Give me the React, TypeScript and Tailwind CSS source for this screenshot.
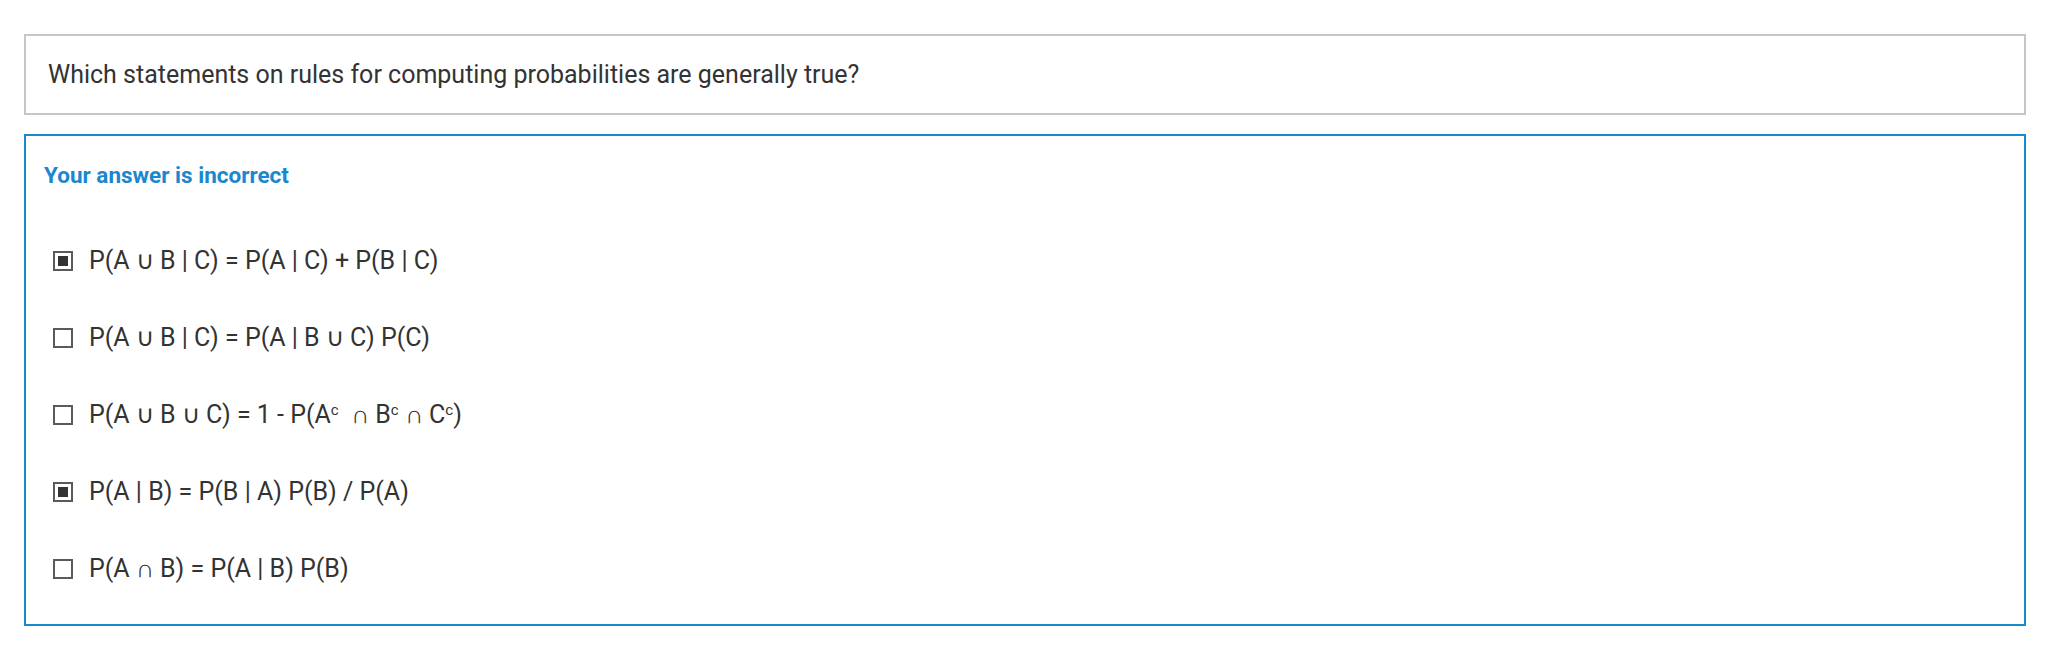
import React from "react";

type Option = {
  checked: boolean;
  label: React.ReactNode;
};

const options: Option[] = [
  { checked: true, label: "P(A ∪ B | C) = P(A | C) + P(B | C)" },
  { checked: false, label: "P(A ∪ B | C) = P(A | B ∪ C) P(C)" },
  {
    checked: false,
    label: (
      <>
        P(A ∪ B ∪ C) = 1 - P(A<sup className="text-[15px] -top-[0.55em]">c</sup>&nbsp; ∩ B
        <sup className="text-[15px] -top-[0.55em]">c</sup> ∩ C<sup className="text-[15px] -top-[0.55em]">c</sup>)
      </>
    ),
  },
  { checked: true, label: "P(A | B) = P(B | A) P(B) / P(A)" },
  { checked: false, label: "P(A ∩ B) = P(A | B) P(B)" },
];

// Read-only checkbox like the ones in the result view
function Box({ checked }: { checked: boolean }) {
  return (
    <span className="flex h-[20px] w-[20px] shrink-0 items-center justify-center border-2 border-[#5a5a5a] bg-white">
      {checked && <span className="h-[10px] w-[10px] bg-[#333333]" />}
    </span>
  );
}

export default function App() {
  return (
    <div className="min-h-screen bg-white px-[24px] pt-[34px] font-['Roboto','Liberation_Sans',sans-serif] text-[#333333]">
      <div className="flex h-[81px] items-center border-2 border-[#c9c6c1] px-[22px] text-[25px]">
        Which statements on rules for computing probabilities are generally true?
      </div>

      <div className="mt-[19px] border-2 border-[#1a87cf] pb-[35px] pl-[18px] pt-[24px]">
        <h3 className="text-[22.5px] font-bold leading-[30px] text-[#1a87cf]">
          Your answer is incorrect
        </h3>
        <ul className="mt-[51px] flex flex-col gap-[37px] pl-[9px]">
          {options.map((opt, i) => (
            <li key={i} className="flex h-[40px] items-center gap-[16px] text-[25px]">
              <Box checked={opt.checked} />
              <span>{opt.label}</span>
            </li>
          ))}
        </ul>
      </div>
    </div>
  );
}
